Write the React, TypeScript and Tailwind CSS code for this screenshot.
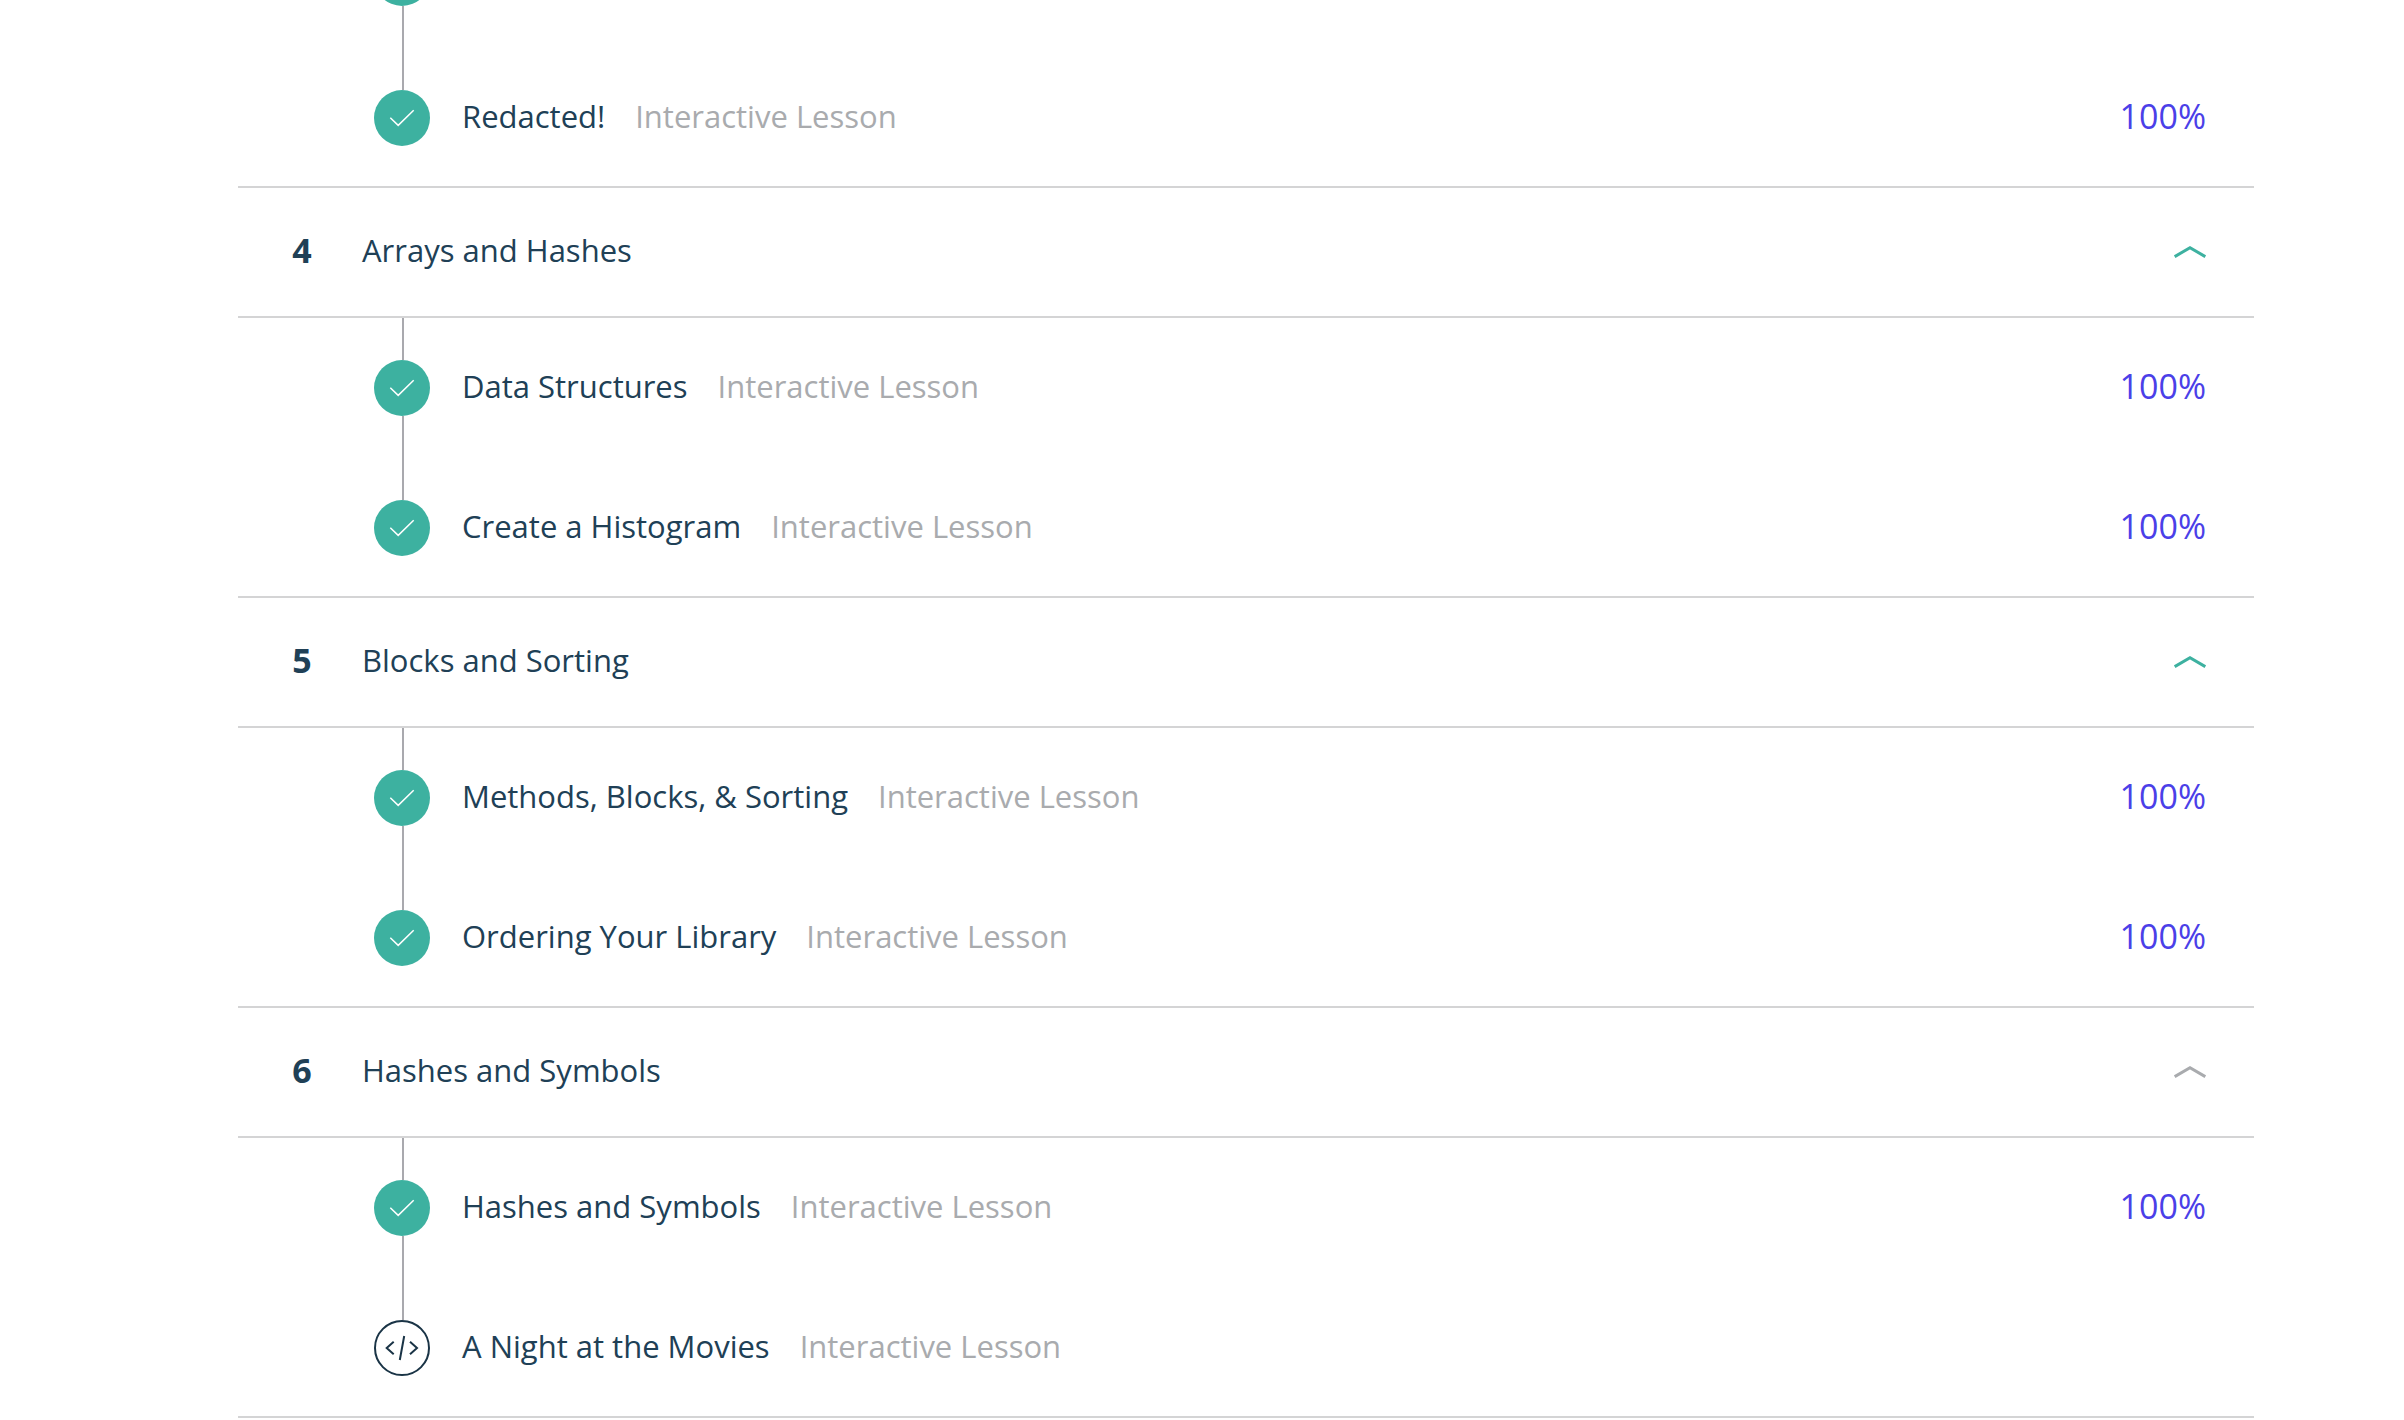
type Lesson = { title?: string; done: boolean };
type Unit = { number?: number; title?: string; complete: boolean; lessons: Lesson[] };

const units: Unit[] = [
  {
    complete: true,
    lessons: [{ done: true }, { title: 'Redacted!', done: true }],
  },
  {
    number: 4,
    title: 'Arrays and Hashes',
    complete: true,
    lessons: [
      { title: 'Data Structures', done: true },
      { title: 'Create a Histogram', done: true },
    ],
  },
  {
    number: 5,
    title: 'Blocks and Sorting',
    complete: true,
    lessons: [
      { title: 'Methods, Blocks, & Sorting', done: true },
      { title: 'Ordering Your Library', done: true },
    ],
  },
  {
    number: 6,
    title: 'Hashes and Symbols',
    complete: false,
    lessons: [
      { title: 'Hashes and Symbols', done: true },
      { title: 'A Night at the Movies', done: false },
    ],
  },
];

function Chevron({ complete }: { complete: boolean }) {
  return (
    <svg
      width="32"
      height="12"
      viewBox="0 0 32 12"
      fill="none"
      strokeWidth="3"
      className={complete ? 'stroke-[#3db1a0]' : 'stroke-[#a9abae]'}
      aria-hidden="true"
    >
      <path d="M0.7 10.6 16 1.8l15.3 8.8" />
    </svg>
  );
}

function StatusIcon({ done }: { done: boolean }) {
  return done ? (
    <svg width="56" height="56" viewBox="0 0 56 56" fill="none" role="img" aria-label="Completed">
      <circle cx="28" cy="28" r="28" fill="#3db1a0" />
      <path d="M16.3 27.7 24.2 35.4 39.7 20.2" stroke="#fff" strokeWidth="1.5" />
    </svg>
  ) : (
    <svg
      width="56"
      height="56"
      viewBox="0 0 56 56"
      fill="none"
      stroke="#1a3446"
      strokeWidth="2"
      role="img"
      aria-label="Not completed"
    >
      <circle cx="28" cy="28" r="27" fill="#fff" />
      <path d="M19.7 21.8 12.7 28l7 6.2M30.2 16 25.8 40M36 21.8l7 6.2-7 6.2" />
    </svg>
  );
}

function LessonRow({ lesson, last }: { lesson: Lesson; last: boolean }) {
  return (
    <li className="flex pr-12 pl-[136px]">
      <div className="flex w-14 shrink-0 flex-col items-center">
        <span className="ml-0.5 h-[42px] w-0.5 bg-[#a9a9ae]" />
        <StatusIcon done={lesson.done} />
        <span className={last ? 'h-10' : 'ml-0.5 h-[42px] w-0.5 bg-[#a9a9ae]'} />
      </div>
      {lesson.title && (
        <div className="ml-8 flex h-[136px] flex-1 items-center gap-[30px]">
          <a href="#lesson" className="text-[31px] leading-10">
            {lesson.title}
          </a>
          <span className="flex-1 text-[31px] leading-10 text-[#a9abae]">Interactive Lesson</span>
          {lesson.done && <span className="text-[34px] leading-10 text-[#4b3fe8]">100%</span>}
        </div>
      )}
    </li>
  );
}

function UnitSection({ unit }: { unit: Unit }) {
  return (
    <section>
      {unit.title && (
        <h2 className="border-b-2 border-[#d4d4d5]">
          <button
            type="button"
            aria-expanded="true"
            className="flex h-32 w-full items-center pr-12 text-left text-[31px] leading-10"
          >
            <span className="w-[124px] pb-1 pl-1 text-center text-[34px] font-bold">{unit.number}</span>
            <span className="flex-1 pb-1">{unit.title}</span>
            <Chevron complete={unit.complete} />
          </button>
        </h2>
      )}
      <ul className="border-b-2 border-[#d4d4d5]">
        {unit.lessons.map((lesson, i) => (
          <LessonRow key={i} lesson={lesson} last={i === unit.lessons.length - 1} />
        ))}
      </ul>
    </section>
  );
}

export default function App() {
  return (
    <main className="min-h-screen overflow-hidden bg-white pr-[150px] pl-[238px] font-['Open_Sans',sans-serif] text-[#204056]">
      <div className="-mt-[92px]">
        {units.map((unit, i) => (
          <UnitSection key={i} unit={unit} />
        ))}
      </div>
    </main>
  );
}
